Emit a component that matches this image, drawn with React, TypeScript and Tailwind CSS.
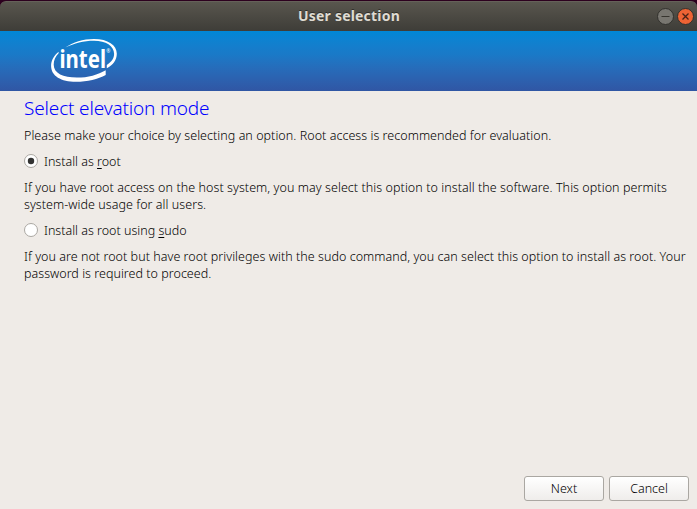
function IntelLogo() {
  return (
    <svg className="ml-[50px] h-[60px] w-[70px]" viewBox="50 31 70 60" aria-label="intel">
      <path
        d="M65.3 47.6C73 42 83 39.1 94 39C108 39.1 116.8 45 116.8 53.8C116.8 60 113 65.4 106.8 68.2V65C111.5 62 114.2 58.2 114.1 53.8C114 46 106 40.8 94 40.8C83.500 40.800 74.500 43.500 65.300 47.600Z"
        fill="white"
      />
      <path
        d="M58.600 51.700C54 55.500 51.100 60.400 51.100 66C51.200 76 61 81.800 76 81.800C87.500 81.800 98 79 105.700 75V70.200C98 74.700 88 77.600 77 77.600C63 77.600 53.900 73.500 53.700 64.800C53.600 60.200 55.500 56.300 58.600 53.300Z"
        fill="white"
      />
      <text fill="white" className="font-['Noto_Sans',sans-serif] text-[24.500px] font-bold">
        <tspan x="59.500" y="67.700" textLength="46.500" lengthAdjust="spacingAndGlyphs">intel</tspan>
        <tspan x="106.300" y="53.200" className="text-[5px] font-normal">®</tspan>
      </text>
    </svg>
  );
}

function TitleBar() {
  return (
    <div className="h-[31px] shrink-0 bg-[#2c001e] pt-px">
      <header className="flex h-[30px] items-center rounded-t-[6px] border-t border-[#656159] bg-linear-to-b from-[#59564e] to-[#3e3d38] pr-[3px]">
        <span className="w-[41px]" />
        <h1 className="-mt-[2px] flex-1 whitespace-nowrap text-center text-[14px] leading-[20px] font-bold tracking-[0.2px] text-[#dfdbd2] [text-shadow:0_-1px_0_#302f2b]">
          User selection
        </h1>
        <div className="-mt-px flex gap-[3px]">
          <svg width="17" height="17" viewBox="0 0 17 17">
            <circle cx="8.500" cy="8.500" r="8" fill="#787670" stroke="#32312d" />
            <path d="M4.500 8.500h8" stroke="#37352f" />
          </svg>
          <svg width="17" height="17" viewBox="0 0 17 17">
            <circle cx="8.500" cy="8.500" r="8" fill="#ef6334" stroke="#32312d" />
            <path d="m5.500 5.500 6 6m0-6-6 6" stroke="#4a2116" strokeWidth="1.300" />
          </svg>
        </div>
      </header>
    </div>
  );
}

function Radio({ checked = false }: { checked?: boolean }) {
  return (
    <svg className="-mt-px" width="14" height="14" viewBox="0 0 14 14">
      <circle cx="7" cy="7" r="6.500" fill="white" stroke="#aaa7a2" />
      {checked && <circle cx="7" cy="7" r="3.200" fill="#333" />}
    </svg>
  );
}

const button =
  "h-[25px] w-[80px] rounded-[3px] border border-[#aaa7a2] bg-linear-to-b from-white to-[#efedeb] text-center leading-[22px]";

export default function App() {
  return (
    <div className="flex h-[509px] w-[697px] flex-col overflow-hidden bg-[#efebe7] font-['Noto_Sans',sans-serif] text-[12.500px] leading-[17px] font-light text-black">
      <TitleBar />
      <div className="h-[60px] shrink-0 bg-linear-to-b from-[#0087d6] via-[#1a79c7] via-40% to-[#3056a4]">
        <IntelLogo />
      </div>
      <main className="flex flex-1 flex-col items-start whitespace-nowrap pl-[24px]">
        <h2 className="mt-[5px] text-[19px] leading-[25px] tracking-[-0.160px] text-[#0000ff]">Select elevation mode</h2>
        <p className="mt-[6px] tracking-[0.045px]">Please make your choice by selecting an option. Root access is recommended for evaluation.</p>
        <label className="mt-[9px] flex items-center gap-[6px]">
          <Radio checked />
          <span>Install as <u className="underline-offset-2">r</u>oot</span>
        </label>
        <p className="mt-[9px] tracking-[0.067px]">If you have root access on the host system, you may select this option to install the software. This option permits</p>
        <p className="tracking-[0.050px]">system-wide usage for all users.</p>
        <label className="mt-[9px] flex items-center gap-[6px]">
          <Radio />
          <span>Install as root using <u className="underline-offset-2">s</u>udo</span>
        </label>
        <p className="mt-[9px] tracking-[0.045px]">If you are not root but have root privileges with the sudo command, you can select this option to install as root. Your</p>
        <p className="tracking-[0.030px]">password is required to proceed.</p>
      </main>
      <footer className="flex justify-end gap-[5px] pr-[8px] pb-[8px]">
        <button className={button}>Next</button>
        <button className={button}>Cancel</button>
      </footer>
    </div>
  );
}
